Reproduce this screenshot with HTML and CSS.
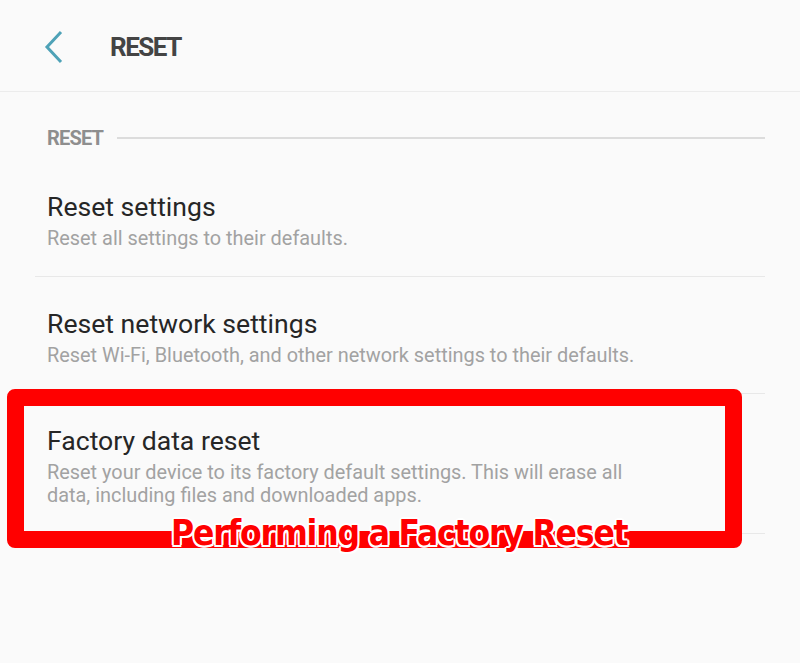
FILE: index.html
```html
<!DOCTYPE html>
<html>
<head>
  <link rel="stylesheet" href="styles.css">
</head>
<body>
  <div class="screen">
    <div class="topbar">
      <svg class="back" width="20" height="34" viewBox="0 0 20 34">
        <path d="M17 2 L3 17 L17 32" fill="none" stroke="#4ea2b7" stroke-width="3"/>
      </svg>
      <h1>RESET</h1>
    </div>

    <div class="content">
      <div class="section">
        <span>RESET</span>
        <div class="rule"></div>
      </div>

      <div class="item">
        <div class="title">Reset settings</div>
        <div class="sub">Reset all settings to their defaults.</div>
      </div>
      <div class="item">
        <div class="title">Reset network settings</div>
        <div class="sub">Reset Wi-Fi, Bluetooth, and other network settings to their defaults.</div>
      </div>
      <div class="item last">
        <div class="title">Factory data reset</div>
        <div class="sub">Reset your device to its factory default settings. This will erase all<br>data, including files and downloaded apps.</div>
      </div>
    </div>

    <!-- highlight drawn over the screenshot -->
    <div class="highlight"></div>
    <div class="caption">Performing a Factory Reset</div>
  </div>
</body>
</html>
```

FILE: styles.css
```css
html, body {
  margin: 0;
  padding: 0;
  background: #fafafa;
}

.screen {
  position: relative;
  width: 800px;
  height: 663px;
  overflow: hidden;
  font-family: Roboto, "Liberation Sans", sans-serif;
}

.topbar {
  display: flex;
  align-items: center;
  height: 92px;
  border-bottom: 1px solid #ececec;
  box-sizing: border-box;
}

.back {
  margin-left: 44px;
  margin-top: 2px;
}

.topbar h1 {
  margin: 2px 0 0 46px;
  font-size: 26px;
  font-weight: 700;
  letter-spacing: -1.5px;
  color: #444;
}

.content {
  padding: 0 35px;
}

.section {
  display: flex;
  align-items: center;
  padding: 35px 0 0 12px;
  height: 22px;
  margin-bottom: 11px;
}

.section span {
  font-size: 20px;
  font-weight: 700;
  letter-spacing: -0.8px;
  color: #8e8e8e;
}

.section .rule {
  flex: 1;
  height: 2px;
  background: #dcdcdc;
  margin-left: 14px;
}

.item {
  padding: 32px 0 26px 12px;
  border-bottom: 1px solid #e8e8e8;
}

.title {
  font-size: 26.6px;
  color: #262626;
  line-height: 30px;
}

.sub {
  margin-top: 5px;
  font-size: 19.9px;
  line-height: 23px;
  color: #a2a2a2;
}

.highlight {
  position: absolute;
  left: 7px;
  top: 389px;
  width: 701px;
  height: 125px;
  border: 17px solid #ff0000;
  border-radius: 8px;
}

.caption {
  position: absolute;
  left: 171px;
  top: 513px;
  font-family: "DejaVu Sans Condensed", "DejaVu Sans", sans-serif;
  font-weight: 700;
  font-size: 35px;
  letter-spacing: -1.15px;
  color: #ff0000;
  text-shadow: 2px 0 0 #fff, -2px 0 0 #fff, 0 2px 0 #fff, 0 -2px 0 #fff,
    1.5px 1.5px 0 #fff, -1.5px -1.5px 0 #fff, 1.5px -1.5px 0 #fff, -1.5px 1.5px 0 #fff;
}
```
